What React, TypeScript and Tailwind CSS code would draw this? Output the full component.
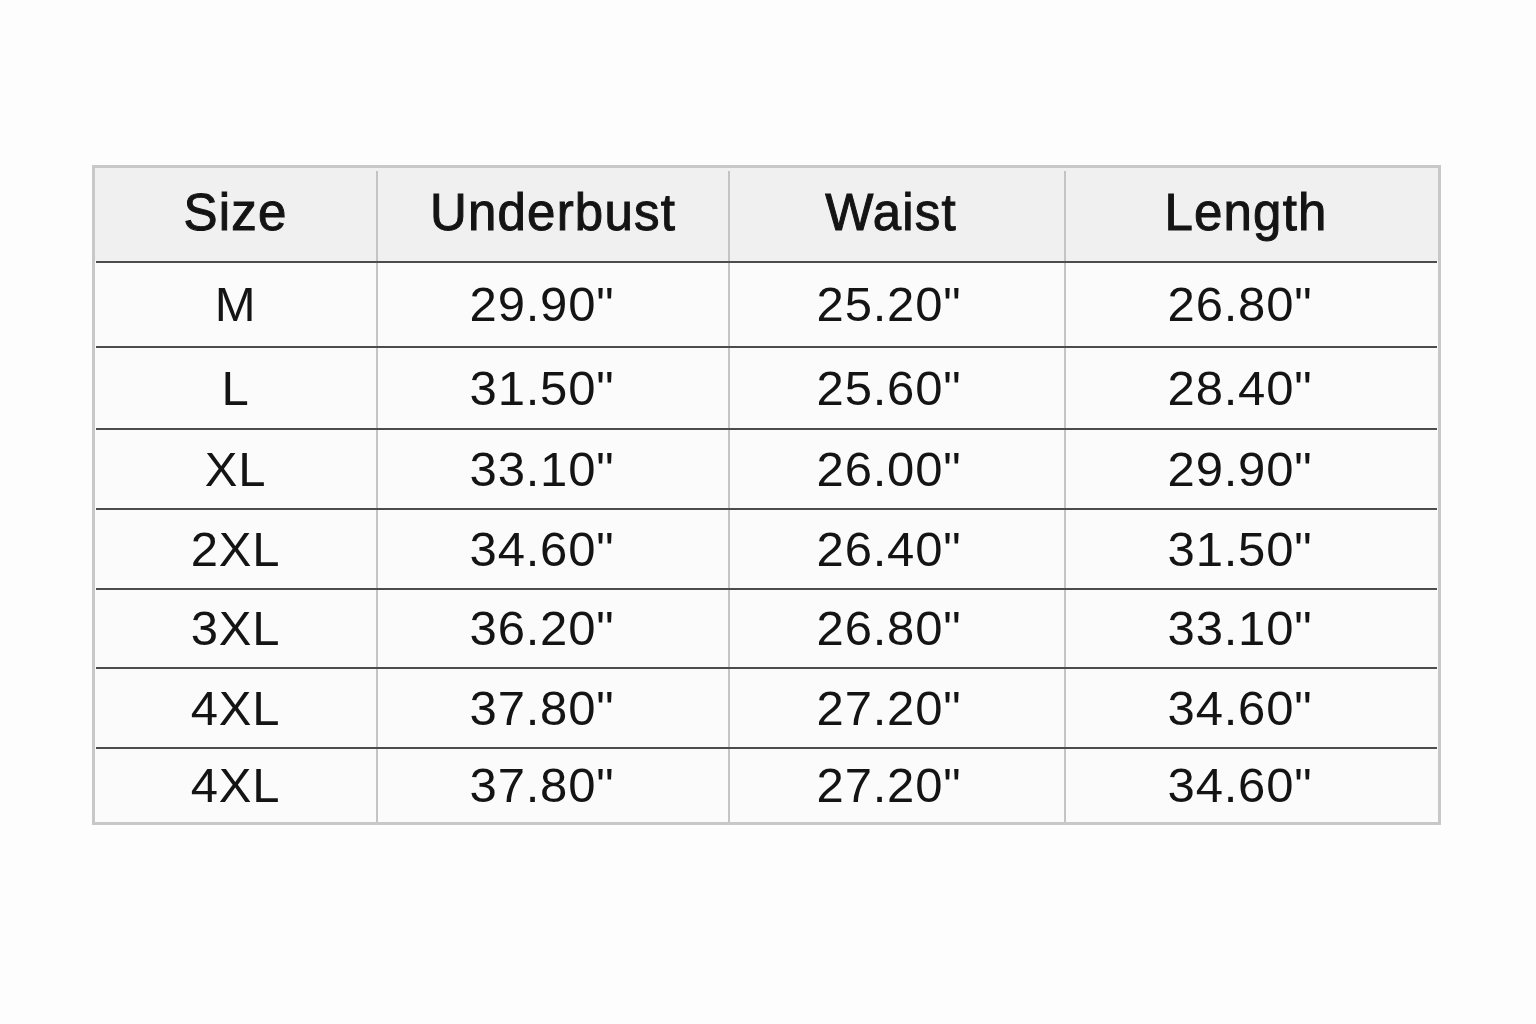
const headers = ["Size", "Underbust", "Waist", "Length"];
const cols = ["w-[281px]", "w-[352px]", "w-[336px]", "flex-1"];
const headPad = ["pl-[0px]", "pl-[0px]", "pr-[12px]", "pr-[12px]"];
const cellPad = ["pl-[0px]", "pr-[22px]", "pr-[16px]", "pr-[24px]"];

const rows = [
  { h: "h-[83px]", cells: ["M", "29.90\"", "25.20\"", "26.80\""] },
  { h: "h-[80px]", cells: ["L", "31.50\"", "25.60\"", "28.40\""] },
  { h: "h-[78px]", cells: ["XL", "33.10\"", "26.00\"", "29.90\""] },
  { h: "h-[78px]", cells: ["2XL", "34.60\"", "26.40\"", "31.50\""] },
  { h: "h-[77px]", cells: ["3XL", "36.20\"", "26.80\"", "33.10\""] },
  { h: "h-[78px]", cells: ["4XL", "37.80\"", "27.20\"", "34.60\""] },
  { h: "h-[73px]", cells: ["4XL", "37.80\"", "27.20\"", "34.60\""] },
];

export default function App() {
  return (
    <div className="min-h-screen w-full bg-[#fdfdfd] pt-[165px] pl-[92px] font-['Liberation_Sans',Arial,sans-serif] text-[#141414]">
      <div className="w-[1349px] border-[3px] border-[#c8c8c8] bg-[#fbfbfb]">
        {/* Header */}
        <div className="flex h-[93px] bg-[#f0f0f0] pt-[3px]">
          {headers.map((t, i) => (
            <div
              key={t}
              className={`${cols[i]} flex items-center justify-center pb-[7px] ${headPad[i]} text-[51px] leading-none tracking-[1.2px] [-webkit-text-stroke:1px_#141414] ${i > 0 ? "border-l-2 border-[#c4c4c4]" : ""}`}
            >
              {t}
            </div>
          ))}
        </div>

        {rows.map((r, ri) => (
          <div key={ri}>
            <div className="mx-[1px] h-[2px] bg-[#4c4c4c]" />
            <div className={`flex ${r.h}`}>
              {r.cells.map((c, i) => (
                <div
                  key={i}
                  className={`${cols[i]} flex items-center justify-center ${cellPad[i]} text-[49px] leading-none tracking-[0.8px] ${i > 0 ? "border-l-2 border-[#c4c4c4]" : ""}`}
                >
                  {c}
                </div>
              ))}
            </div>
          </div>
        ))}
      </div>
    </div>
  );
}
